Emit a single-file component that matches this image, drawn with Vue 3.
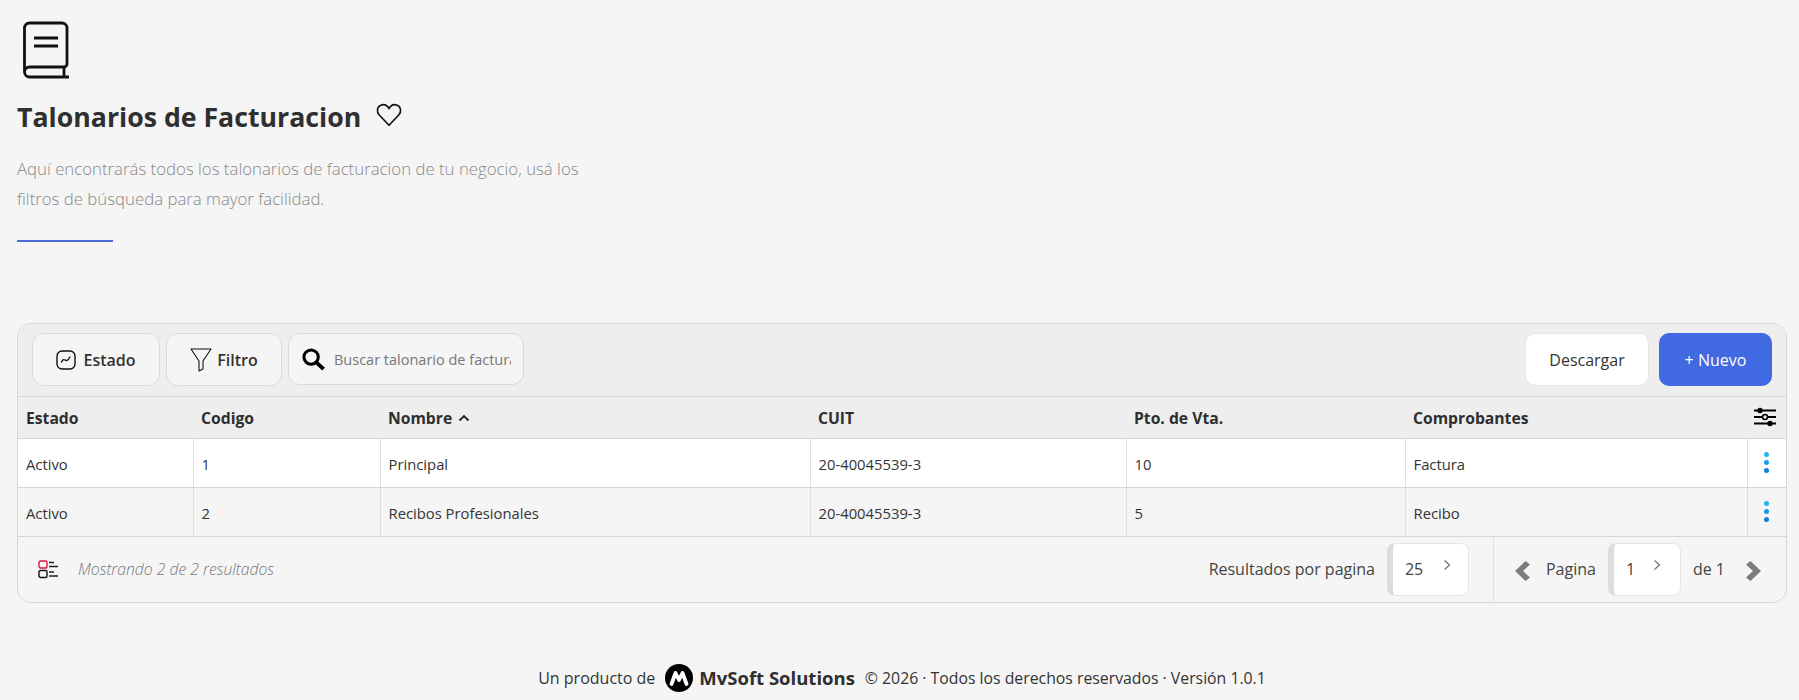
<template>
  <div class="page">
    <header class="intro">
      <svg class="book" viewBox="0 0 46 58" fill="none" stroke="#111" stroke-width="2.800">
        <path d="M1.500 50V7a5 5 0 0 1 5-5H39a5 5 0 0 1 5 5v36a3 3 0 0 1-3 3H6.500a5 5 0 0 0 0 10H46" stroke-linejoin="round" />
        <path d="M41 46v10" />
        <path d="M11 17h24M11 25h24" />
      </svg>
      <div class="title-row">
        <h1>Talonarios de Facturacion</h1>
        <svg class="heart" viewBox="0 0 24 24" fill="none" stroke="#111" stroke-width="1.500" stroke-linejoin="round">
          <path d="M12 21.500 3 12C.2 9 1 4.200 4.500 2.900 7.500 1.800 10.500 3.200 12 6.200c1.500-3 4.500-4.400 7.500-3.300C23 4.200 23.800 9 21 12z" />
        </svg>
      </div>
      <p class="desc">Aquí encontrarás todos los talonarios de facturacion de tu negocio, usá los filtros de búsqueda para mayor facilidad.</p>
      <div class="rule"></div>
    </header>

    <section class="card">
      <div class="toolbar">
        <button class="tool estado">
          <svg viewBox="0 0 20 20" fill="none" stroke="#111" stroke-width="1.400" class="tool-icon">
            <rect x="1" y="1" width="18" height="18" rx="5" />
            <path d="M5.500 12c1-2 2-3 3.500-2s2.500 1 5-3" stroke-linecap="round" />
          </svg>
          Estado
        </button>
        <button class="tool filtro">
          <svg viewBox="0 0 22 24" fill="none" stroke="#111" stroke-width="1.100" class="filter-icon" stroke-linejoin="round">
            <path d="M1 1h20l-8 12v8l-4 2V13z" />
          </svg>
          Filtro
        </button>
        <label class="search">
          <svg viewBox="0 0 24 24" fill="none" stroke="#000" class="search-icon">
            <circle cx="9.500" cy="9.500" r="7.500" stroke-width="3.200" />
            <path d="m15 15 7.500 7" stroke-width="4" />
          </svg>
          <input type="text" placeholder="Buscar talonario de facturacion" />
        </label>
        <div class="spacer"></div>
        <button class="download">Descargar</button>
        <button class="new">+ Nuevo</button>
      </div>

      <table>
        <colgroup>
          <col v-for="w in colWidths" :key="w" :style="{ width: w + 'px' }" />
        </colgroup>
        <thead>
          <tr>
            <th>Estado</th>
            <th>Codigo</th>
            <th>
              Nombre
              <svg class="caret" viewBox="0 0 12 8" fill="none" stroke="#222" stroke-width="1.800"><path d="m1.500 6.500 4.500-4.500 4.500 4.500" /></svg>
            </th>
            <th>CUIT</th>
            <th>Pto. de Vta.</th>
            <th>Comprobantes</th>
            <th class="cfg">
              <svg viewBox="0 0 24 20" class="sliders" fill="none" stroke="#000" stroke-width="1.800">
                <path d="M1 3.500h22M1 10h22M1 16.500h22" />
                <circle cx="7" cy="3.500" r="2.700" fill="#000" stroke="none" />
                <circle cx="12" cy="10" r="2.500" fill="#eee" stroke-width="1.500" />
                <circle cx="17" cy="16.500" r="2.700" fill="#000" stroke="none" />
              </svg>
            </th>
          </tr>
        </thead>
        <tbody>
          <tr v-for="row in rows" :key="row.codigo">
            <td>{{ row.estado }}</td>
            <td>{{ row.codigo }}</td>
            <td>{{ row.nombre }}</td>
            <td>{{ row.cuit }}</td>
            <td>{{ row.pto }}</td>
            <td>{{ row.tipo }}</td>
            <td class="menu">
              <span class="dots"><i></i><i></i><i></i></span>
            </td>
          </tr>
        </tbody>
      </table>

      <div class="pager">
        <svg class="list-icon" viewBox="0 0 20 19" fill="none" stroke-width="1.400">
          <rect x="1" y="1" width="8" height="7" rx="1.500" stroke="#d8163a" />
          <rect x="1" y="10.500" width="8" height="7" rx="1.500" stroke="#111" />
          <path d="M11 2.500h5M11 6.500h9M11 12h5M11 16h9" stroke="#222" />
        </svg>
        <span class="count">Mostrando 2 de 2 resultados</span>
        <div class="spacer"></div>
        <span class="per-label">Resultados por pagina</span>
        <div class="select per">
          <span>25</span>
          <svg class="sel-arrow" viewBox="0 0 8 12" fill="none" stroke="#777" stroke-width="1.300"><path d="m1.500 1.500 5 4.500-5 4.500" /></svg>
        </div>
        <div class="nav">
          <svg class="arrow" viewBox="0 0 15 20" fill="#7c7c7c"><path d="M10.500 0 15 3.500 8 10l7 6.500-4.500 3.500L0 10z" /></svg>
          <span class="nav-page">Pagina</span>
          <div class="select page-sel">
            <span>1</span>
            <svg class="sel-arrow" viewBox="0 0 8 12" fill="none" stroke="#777" stroke-width="1.300"><path d="m1.500 1.500 5 4.500-5 4.500" /></svg>
          </div>
          <span class="nav-of">de 1</span>
          <svg class="arrow" viewBox="0 0 15 20" fill="#7c7c7c"><path d="M4.500 0 0 3.500 7 10l-7 6.500L4.500 20 15 10z" /></svg>
        </div>
      </div>
    </section>

    <footer class="foot">
      <span>Un producto de</span>
      <svg class="logo" viewBox="0 0 28 28">
        <circle cx="14" cy="14" r="14" fill="#000" />
        <path d="M6.500 20 10.500 9 14 16l3.500-7 4 11" fill="none" stroke="#fff" stroke-width="3.800" stroke-linejoin="round" stroke-linecap="round" />
      </svg>
      <strong>MvSoft Solutions</strong>
      <span class="copy">© 2026 · Todos los derechos reservados · Versión 1.0.1</span>
    </footer>
  </div>
</template>

<script setup>
const colWidths = [175, 187, 430, 316, 279, 342, 39]

const rows = [
  { estado: 'Activo', codigo: 1, nombre: 'Principal', cuit: '20-40045539-3', pto: 10, tipo: 'Factura' },
  { estado: 'Activo', codigo: 2, nombre: 'Recibos Profesionales', cuit: '20-40045539-3', pto: 5, tipo: 'Recibo' },
]
</script>

<style scoped>
.page {
  height: 700px;
  padding: 0 12px 0 17px;
  box-sizing: border-box;
  background: #f5f5f5;
  font-family: "Open Sans", sans-serif;
  color: #333;
  overflow: hidden;
}

.intro {
  padding-top: 21px;
  height: 323px;
  box-sizing: border-box;
}

.book {
  display: block;
  width: 46px;
  height: 58px;
  margin-left: 6px;
}

.title-row {
  display: flex;
  align-items: center;
  gap: 15px;
  margin-top: 19px;
}

h1 {
  margin: 0;
  font-size: 26.700px;
  line-height: 38px;
  font-weight: 700;
  color: #2f2f2f;
}

.heart {
  width: 26px;
  height: 26px;
  margin-top: -4px;
}

.desc {
  width: 575px;
  margin: 18px 0 0;
  font-size: 16.800px;
  line-height: 30px;
  font-weight: 300;
  color: #888;
}

.rule {
  width: 96px;
  height: 2px;
  margin-top: 26px;
  background: #4a6bd0;
}

.card {
  border: 1px solid #d6d6d6;
  border-radius: 14px;
  overflow: hidden;
  background: #f5f5f5;
}

.toolbar {
  display: flex;
  align-items: flex-start;
  height: 73px;
  padding: 9px 14px 0 14px;
  box-sizing: border-box;
  background: #eeeeee;
  border-bottom: 1px solid #d6d6d6;
}

.spacer {
  flex: 1;
}

button {
  font-family: inherit;
  cursor: pointer;
}

.tool {
  display: flex;
  align-items: center;
  justify-content: center;
  height: 53px;
  border: 1px solid #d9d9d9;
  border-radius: 12px;
  background: #f5f5f5;
  font-size: 16px;
  font-weight: 600;
  color: #333;
  padding: 0;
}

.estado {
  width: 128px;
  gap: 7px;
  margin-right: 6px;
}

.filtro {
  width: 116px;
  gap: 5px;
  margin-right: 6px;
}

.tool-icon {
  width: 20px;
  height: 20px;
}

.filter-icon {
  width: 22px;
  height: 24px;
}

.search {
  display: flex;
  align-items: center;
  width: 236px;
  height: 52px;
  padding: 0 12px 0 13px;
  box-sizing: border-box;
  border: 1px solid #d9d9d9;
  border-radius: 12px;
  background: #f5f5f5;
}

.search-icon {
  flex: none;
  width: 23px;
  height: 23px;
  margin-right: 9px;
}

.search input {
  flex: 1;
  min-width: 0;
  border: 0;
  padding: 0;
  outline: 0;
  background: transparent;
  font: 400 14.500px "Open Sans", sans-serif;
}

.search input::placeholder {
  color: #777;
  opacity: 1;
}

.download {
  width: 124px;
  height: 53px;
  margin-right: 10px;
  border: 1px solid #e6e6e6;
  border-radius: 10px;
  background: #fff;
  font-size: 16px;
  color: #333;
}

.new {
  width: 113px;
  height: 53px;
  border: 0;
  border-radius: 10px;
  background: #4169e1;
  font-size: 16px;
  color: #fff;
}

table {
  width: 100%;
  table-layout: fixed;
  border-collapse: collapse;
}

th {
  height: 41px;
  padding: 2px 8px 0;
  box-sizing: border-box;
  background: #eeeeee;
  border-bottom: 1px solid #d6d6d6;
  text-align: left;
  font-size: 15.700px;
  font-weight: 700;
  color: #2f2f2f;
}

.caret {
  width: 12px;
  height: 8px;
  margin-left: 2px;
  vertical-align: 2px;
}

.cfg {
  padding: 0 6px 0 6px;
}

.sliders {
  display: block;
  width: 24px;
  height: 20px;
}

td {
  height: 49px;
  padding: 2px 8px 0;
  box-sizing: border-box;
  border-bottom: 1px solid #d6d6d6;
  border-right: 1px solid #dedede;
  font-size: 14.800px;
  color: #333;
}

td:last-child {
  border-right: 0;
}

tbody tr:nth-child(odd) td {
  background: #fff;
}

tbody tr:nth-child(even) td {
  background: #f5f5f5;
}

.menu {
  padding: 0;
}

.dots {
  display: flex;
  flex-direction: column;
  align-items: center;
  gap: 3px;
}

.dots i {
  width: 5px;
  height: 5px;
  border-radius: 50%;
  background: #139be8;
}

.dots i:first-child {
  background: #22b5ee;
}

.dots i:last-child {
  background: #0f80dc;
}

.pager {
  display: flex;
  align-items: center;
  height: 65px;
  padding-left: 20px;
}

.list-icon {
  width: 20px;
  height: 19px;
  margin-right: 20px;
}

.count {
  font-size: 15.700px;
  font-style: italic;
  font-weight: 300;
  color: #777;
}

.per-label {
  margin-right: 12px;
  font-size: 16px;
  color: #444;
}

.select {
  display: flex;
  align-items: center;
  height: 53px;
  box-sizing: border-box;
  border: 1px solid #e6e6e6;
  border-left: 6px solid #dcdcdc;
  border-radius: 8px;
  background: #fff;
  font-size: 16px;
  color: #444;
}

.per {
  width: 82px;
  padding-left: 12px;
  margin-right: 24px;
  gap: 20px;
}

.page-sel {
  width: 73px;
  padding-left: 12px;
  gap: 18px;
}

.sel-arrow {
  width: 8px;
  height: 12px;
  margin-top: -8px;
}

.nav {
  display: flex;
  align-items: center;
  height: 100%;
  padding: 0 25px 0 21px;
  border-left: 1px solid #dedede;
  font-size: 16px;
  color: #444;
}

.nav-page {
  margin: 0 12px 0 16px;
}

.nav-of {
  margin: 0 21px 0 12px;
}

.arrow {
  width: 15px;
  height: 20px;
  margin-top: 4px;
}

.foot {
  display: flex;
  justify-content: center;
  align-items: center;
  margin-top: 61px;
  font-size: 16px;
  color: #333;
}

.logo {
  width: 28px;
  height: 28px;
  margin: 0 6px 0 10px;
}

strong {
  font-size: 18.500px;
  font-weight: 700;
  color: #2f2f2f;
}

.copy {
  margin-left: 10px;
  font-size: 15.800px;
}
</style>
